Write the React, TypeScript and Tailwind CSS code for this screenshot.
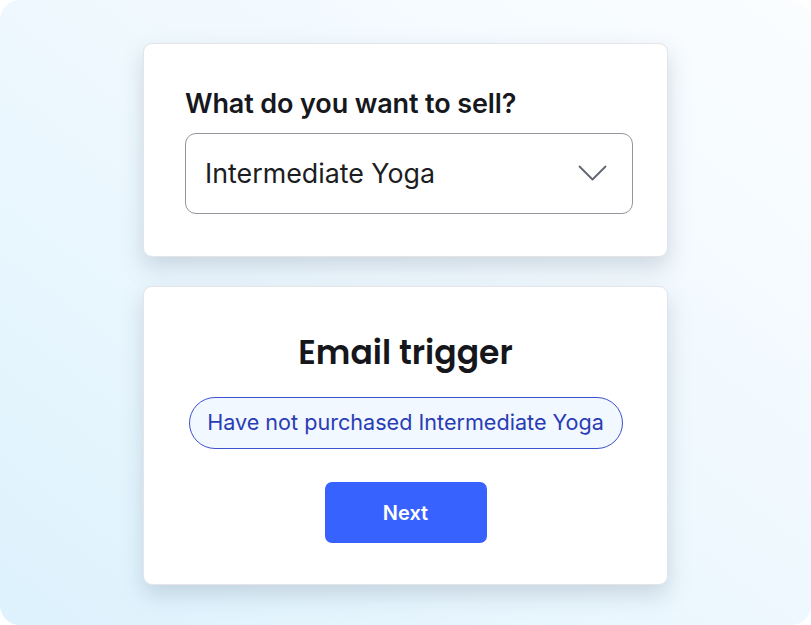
import React from "react";

export default function App() {
  return (
    <div className="w-[811px] h-[625px] bg-white" style={{ fontFamily: "Inter, 'Noto Sans', sans-serif" }}>
      <div className="w-full h-full rounded-[20px] bg-gradient-to-tr from-[#ddf2fd] via-[#eef8fe] to-[#fbfdff] flex flex-col items-center pt-[43px] gap-[29px]">
        <div className="w-[525px] bg-white border border-[#e3e5e8] rounded-[9px] shadow-[0_10px_22px_rgba(110,130,150,0.28)] pt-[46px] pb-[42px] pl-[41px] flex flex-col gap-[16px]">
          <div className="text-[27px] leading-none font-semibold text-[#16181d] tracking-[-0.12px]">What do you want to sell?</div>
          <div className="w-[448px] h-[81px] border-[1.5px] border-[#94969d] rounded-[11px] flex items-center justify-between pl-[19px] pr-[25px]">
            <span className="text-[26.8px] leading-none text-[#1b1d22]">Intermediate Yoga</span>
            <svg width="29" height="17" viewBox="0 0 29 17" fill="none">
              <polyline points="1.5,1.5 14.5,14.5 27.5,1.5" stroke="#5f6570" strokeWidth="1.8" strokeLinecap="round" strokeLinejoin="round" />
            </svg>
          </div>
        </div>
        <div className="w-[525px] bg-white border border-[#e3e5e8] rounded-[9px] shadow-[0_10px_22px_rgba(110,130,150,0.28)] pt-[49px] pb-[41px] flex flex-col items-center">
          <div className="text-[33px] leading-none font-semibold text-[#15171c]" style={{ fontFamily: "Poppins, Inter, sans-serif" }}>Email trigger</div>
          <div className="mt-[28px] h-[52px] w-[434px] rounded-full border-[1.5px] border-[#3d52cf] bg-[#f1f8ff] flex items-center justify-center">
            <span className="text-[21.6px] leading-none text-[#2a3cb5]">Have not purchased Intermediate Yoga</span>
          </div>
          <div className="mt-[33px] w-[162px] h-[61px] rounded-[7px] bg-[#3862fe] flex items-center justify-center">
            <span className="text-[20px] leading-none font-semibold text-white">Next</span>
          </div>
        </div>
      </div>
    </div>
  );
}
